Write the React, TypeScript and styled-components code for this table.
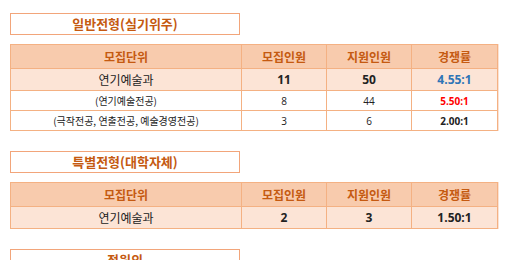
import styled, { createGlobalStyle } from 'styled-components';

const GlobalStyle = createGlobalStyle`
  html, body {
    margin: 0;
    padding: 0;
    overflow: hidden;
    background: #fff;
  }
  body {
    font-family: "Noto Sans CJK KR", "Noto Sans", sans-serif;
    color: #222;
  }
`;

const Page = styled.div`
  padding: 13px 10px 0;
  display: flex;
  flex-direction: column;
`;

const Section = styled.section`
  margin-bottom: 20px;
`;

const Title = styled.h2`
  box-sizing: border-box;
  width: 230px;
  height: 22px;
  margin: 0 0 9px;
  border: 1.5px solid #f2a57a;
  color: #c55a11;
  font-size: 13px;
  font-weight: 700;
  line-height: 19px;
  text-align: center;
`;

const Table = styled.table`
  width: 483px;
  border-collapse: collapse;
  table-layout: fixed;
  box-shadow: 1px 0 0 #fbe2d4;
`;

const Th = styled.th<{ $w: number }>`
  width: ${(p) => p.$w}px;
  height: 23px;
  padding: 0;
  background: #f8cbad;
  color: #c55a11;
  font-size: 12px;
  font-weight: 700;
  border: 1px solid #f4b183;
`;

const Row = styled.tr<{ $main?: boolean }>`
  background: ${(p) => (p.$main ? '#fce4d6' : '#fff')};
  height: ${(p) => (p.$main ? 22 : 20)}px;
`;

const Td = styled.td<{ $size?: number; $bold?: boolean; $color?: string }>`
  padding: 0;
  text-align: center;
  border: 1px solid #f4b183;
  font-size: ${(p) => p.$size ?? 12}px;
  font-weight: ${(p) => (p.$bold ? 700 : 400)};
  color: ${(p) => p.$color ?? '#222'};
  line-height: 1;
  white-space: nowrap;
`;

const Num = styled(Td)`
  font-family: "Open Sans", "Liberation Sans", sans-serif;
`;

const heads = ['모집단위', '모집인원', '지원인원', '경쟁률'];
const widths = [230, 84, 84, 85];

function Head() {
  return (
    <thead>
      <tr>
        {heads.map((h, i) => (
          <Th key={h} $w={widths[i]}>
            {h}
          </Th>
        ))}
      </tr>
    </thead>
  );
}

export default function App() {
  return (
    <>
      <GlobalStyle />
      <Page>
        <Section>
          <Title>일반전형(실기위주)</Title>
          <Table>
            <Head />
            <tbody>
              <Row $main>
                <Td $size={12}>연기예술과</Td>
                <Num $bold>11</Num>
                <Num $bold>50</Num>
                <Num $bold $color="#2e75b6">4.55:1</Num>
              </Row>
              <Row>
                <Td $size={10}>(연기예술전공)</Td>
                <Num $size={10}>8</Num>
                <Num $size={10}>44</Num>
                <Num $size={10} $bold $color="#ff0000">5.50:1</Num>
              </Row>
              <Row>
                <Td $size={10}>(극작전공, 연출전공, 예술경영전공)</Td>
                <Num $size={10}>3</Num>
                <Num $size={10}>6</Num>
                <Num $size={10} $bold>2.00:1</Num>
              </Row>
            </tbody>
          </Table>
        </Section>
        <Section>
          <Title>특별전형(대학자체)</Title>
          <Table>
            <Head />
            <tbody>
              <Row $main>
                <Td $size={12}>연기예술과</Td>
                <Num $bold>2</Num>
                <Num $bold>3</Num>
                <Num $bold>1.50:1</Num>
              </Row>
            </tbody>
          </Table>
        </Section>
        <Section>
          <Title>정원외</Title>
        </Section>
      </Page>
    </>
  );
}
